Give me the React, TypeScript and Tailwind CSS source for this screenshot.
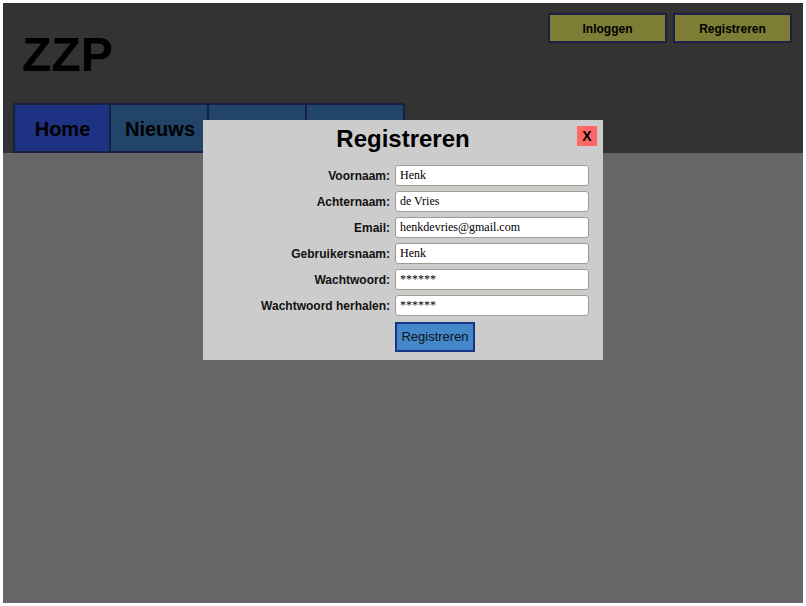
import React from "react";

const navItems = ["Home", "Nieuws", "Over ons", "Contact"];

const fields = [
  { label: "Voornaam:", value: "Henk" },
  { label: "Achternaam:", value: "de Vries" },
  { label: "Email:", value: "henkdevries@gmail.com" },
  { label: "Gebruikersnaam:", value: "Henk" },
  { label: "Wachtwoord:", value: "******" },
  { label: "Wachtwoord herhalen:", value: "******" }
];

export default function App() {
  return (
    <div className="min-h-screen bg-white p-[3px] font-['Liberation_Sans',Arial,sans-serif]">
      <div className="relative flex h-[600px] w-[800px] flex-col bg-[#666666]">
        <header className="flex h-[150px] flex-col bg-[#333333]">
          <div className="flex h-[100px] justify-between">
            <h1 className="pl-[19px] pt-[28px] text-[48px] font-bold leading-none text-black">ZZP</h1>
            <div className="flex gap-[6px] pr-[11px] pt-[10px]">
              <button
                type="button"
                className="h-[30px] w-[119px] border-2 border-[#1a2248] bg-[#7d7d35] pt-[1px] text-[12px] font-bold text-black"
              >
                Inloggen
              </button>
              <button
                type="button"
                className="h-[30px] w-[119px] border-2 border-[#1a2248] bg-[#7d7d35] pt-[1px] text-[12px] font-bold text-black"
              >
                Registreren
              </button>
            </div>
          </div>
          <nav className="flex h-[50px] pl-[10px]">
            {navItems.map((item, i) => (
              <a
                key={item}
                href="#"
                className={
                  i === 0
                    ? "flex w-[98px] items-center justify-center border-2 border-[#15213f] bg-[#1e3283] pl-[1px] pt-[1px] text-[20px] font-bold text-black"
                    : "flex w-[98px] items-center justify-center border-y-2 border-r-2 border-[#15213f] bg-[#224468] pl-[2px] pt-[1px] text-[20px] font-bold text-black"
                }
              >
                {item}
              </a>
            ))}
          </nav>
        </header>

        {/* registreren popup */}
        <div className="absolute left-[200px] top-[117px] h-[240px] w-[400px] bg-[#cccccc]">
          <h2 className="pt-[5px] text-center text-[24px] font-bold leading-[28px] text-black">Registreren</h2>
          <button
            type="button"
            className="absolute right-[6px] top-[6px] flex h-[20px] w-[20px] items-center justify-center bg-[#ff6666] text-[14px] font-bold text-black"
          >
            X
          </button>
          <form className="mt-[12px] grid grid-cols-[187px_194px] gap-x-[5px] gap-y-[5px]">
            {fields.map((f) => (
              <React.Fragment key={f.label}>
                <label className="flex h-[21px] items-center justify-end pt-[1px] text-[12px] font-bold text-[#111]">
                  {f.label}
                </label>
                <input
                  className="h-[21px] w-[194px] rounded-[3px] border border-[#a39a8f] bg-white px-[4px] font-['Liberation_Serif','Times_New_Roman',serif] text-[12px] text-black outline-none"
                  defaultValue={f.value}
                />
              </React.Fragment>
            ))}
            <div />
            <button
              type="button"
              className="mt-[1px] h-[30px] w-[80px] border-2 border-[#1b3585] bg-[#4488cc] text-[13px] text-[#111]"
            >
              Registreren
            </button>
          </form>
        </div>
      </div>
    </div>
  );
}
